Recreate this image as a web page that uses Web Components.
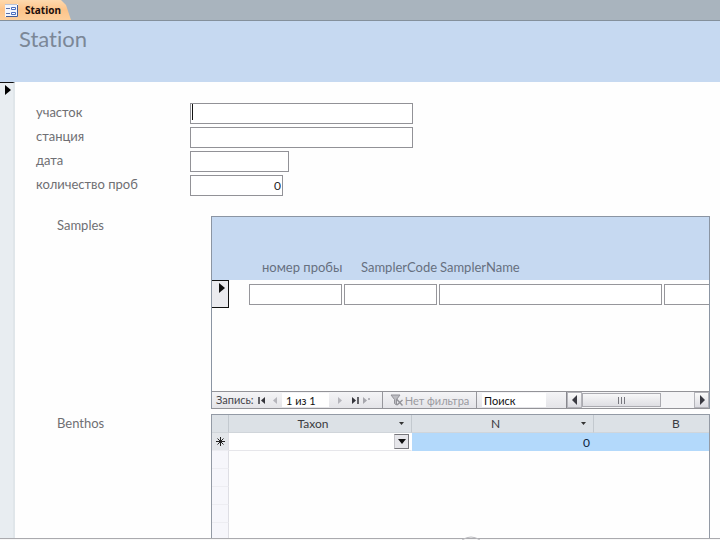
<!DOCTYPE html>
<html lang="ru">
<head>
<meta charset="utf-8">
<title>Station</title>
<style>
html, body { margin: 0; background: #fefefe; }
body { font-family: Lato, Carlito, "Open Sans", sans-serif; font-size: 12px; color: #6f6f73; font-variant-ligatures: none; font-variant-numeric: tabular-nums; }
</style>
</head>
<body>
<station-form></station-form>

<template id="t-tabs">
<style>
:host { display: flex; height: 20px; background: #a9b4be; border-bottom: 1px solid #84909b; }
button { display: flex; align-items: center; gap: 7px; height: 20px; padding: 0 13px 0 5px; border: 0;
  background: linear-gradient(#fdd9ae, #fdc48a 50%, #fdcf9c); clip-path: polygon(0 0, 61px 0, 66px 5px, 71px 20px, 0 20px);
  font: bold 10px "Noto Sans", sans-serif; color: #1c0f0c; }
svg { flex: none; }
</style>
<button type="button"><svg width="13" height="13" viewBox="0 0 13 13"><path d="M0 0h13v13H0z" fill="#f3f6fd"/><path d="M12.500 1v11.500H1" fill="none" stroke="#425c97"/><path d="M0 .5h12" stroke="#b9c3d8"/><path d="M1 4.500h4M1 9.500h4" stroke="#5a70a8"/><path d="M6.500 3.500h4v2h-4zM6.500 8.500h4v2h-4z" fill="#fff" stroke="#4a6ec0"/></svg><slot></slot></button>
</template>

<template id="t-field">
<style>
:host { display: flex; align-items: flex-start; height: 24px; }
label { width: 154px; flex: none; line-height: 18px; font-size: 13px; }
input { box-sizing: border-box; width: var(--w, 223px); height: 21px; margin: 0; padding: 0 1px; border: 1px solid #929297; background: #fff;
  font: 12px Lato, sans-serif; font-variant-numeric: tabular-nums; color: #26262a; text-align: right; outline: 0; border-radius: 0; }
:host([active]) input { background: linear-gradient(#111, #111) 1px 0 / 1px 16px no-repeat #fff; }
</style>
<label for="f"></label><input id="f" type="text">
</template>

<template id="t-sub">
<style>
:host { display: flex; }
span { width: 154px; flex: none; line-height: 18px; font-size: 13px; }
section { flex: 1; min-width: 0; display: flex; flex-direction: column; }
</style>
<span id="n"></span><section aria-labelledby="n"><slot></slot></section>
</template>

<template id="t-nav">
<style>
:host { display: flex; align-items: stretch; height: 16px; border-top: 1px solid #939398; background: linear-gradient(#f4f4f6, #e4e4e8); font-size: 11px; color: #44444a; line-height: 16px; }
label { box-sizing: border-box; padding-left: 4px; width: 43px; flex: none; white-space: nowrap; }
button { padding: 0; margin: 0; border: 0; background: none; font: 11px Lato, sans-serif; color: #9a9aa0; display: flex; align-items: center; justify-content: center; flex: none; width: 13px; }
input { box-sizing: border-box; border: 0; margin: 1px 0; padding: 0 4px; background: #fff; font: 11px Lato, sans-serif; font-variant-numeric: tabular-nums; color: #111; flex: none; outline: 0; border-radius: 0; }
input::placeholder { color: #111; opacity: 1; }
#rec { width: 47px; }
#find { width: 64px; margin-left: 5px; padding: 0 2px; }
.first { width: 14px; }
.next { width: 20px; }
.new { width: 10px; }
.filter { width: 95px; gap: 2px; margin-left: 10px; border: solid #97979c; border-width: 0 1px; white-space: nowrap; }
.bar { flex: 1; min-width: 60px; display: flex; margin-left: 20px; border-left: 1px solid #88888e; background: #f4f4f6; }
.bar button { width: 15px; background: linear-gradient(#fafafa, #dcdce2); border: 1px solid #b4b4ba; box-sizing: border-box; }
.thumb { width: 79px; flex: none; box-sizing: border-box; margin: 1px 0; border: 1px solid #aaaab0; background: linear-gradient(#f7f7f8, #dedee3); display: flex; align-items: center; justify-content: center; }
.gap { flex: 1; }
</style>
<label for="rec">Запись:</label>
<button type="button" aria-label="Первая запись" class="first"><svg width="9" height="9"><path d="M1 1v7" stroke="#34343a" stroke-width="1.500"/><path d="M7 1v7L3 4.500z" fill="#34343a"/></svg></button>
<button type="button" aria-label="Предыдущая запись"><svg width="7" height="7"><path d="M5 0v7L1 3.500z" fill="#b5b5bb"/></svg></button>
<input id="rec" type="text" value="1 из 1">
<button type="button" aria-label="Следующая запись" class="next"><svg width="7" height="7"><path d="M2 0v7l4-3.500z" fill="#b5b5bb"/></svg></button>
<button type="button" aria-label="Последняя запись"><svg width="9" height="9"><path d="M7 1v7" stroke="#34343a" stroke-width="1.500"/><path d="M1 1v7l4-3.500z" fill="#34343a"/></svg></button>
<button type="button" aria-label="Новая запись" class="new"><svg width="10" height="9"><path d="M1 1v7l4-3.500z" fill="#a6a6ac"/><path d="M6 2l2 2M8 2L6 4" stroke="#b5b5bb"/></svg></button>
<button type="button" class="filter"><svg width="13" height="12" viewBox="0 0 13 12"><path d="M1 1h9L6.500 5.500V11L4.500 9.500v-4z" fill="#bdbdc2" stroke="#929298"/><path d="M6.500 5l6 6.500M12.500 6L7 11" stroke="#929298" stroke-width="1.400"/></svg>Нет фильтра</button>
<input id="find" type="text" placeholder="Поиск" aria-label="Поиск">
<div class="bar"><button type="button" aria-label="Влево"><svg width="6" height="10"><path d="M5 0v10L0 5z" fill="#3a3a42"/></svg></button><div class="thumb"><svg width="7" height="7"><path d="M.5 0v7M3.500 0v7M6.500 0v7" stroke="#77777e"/></svg></div><div class="gap"></div><button type="button" aria-label="Вправо"><svg width="6" height="10"><path d="M1 0v10l5-5z" fill="#3a3a42"/></svg></button></div>
</template>

<template id="t-samples">
<style>
:host { display: flex; flex-direction: column; border: 1px solid #8b95a3; border-bottom-color: #939398; background: #fefefe; overflow: hidden; }
header { height: 63px; background: #c6d9f1; display: flex; align-items: flex-end; box-sizing: border-box; padding: 0 0 4px 50px; color: #66707f; line-height: 18px; font-size: 13px; white-space: nowrap; }
header label:nth-child(1) { width: 99px; flex: none; }
header label:nth-child(2) { width: 79px; flex: none; }
.row { display: flex; height: 111px; }
.sel { width: 17px; height: 28px; box-sizing: border-box; border: solid #111; border-width: 1px 1px 1px 0; background: #ebebef; display: flex; padding: 2px 0 0 7px; flex: none; margin-right: 20px; }
input { flex: none; box-sizing: border-box; width: 93px; height: 21px; margin: 4px 2px 0 0; border: 1px solid #96969b; background: #fff; padding: 0; outline: 0; border-radius: 0; }
.wide { width: 223px; }
</style>
<header><label for="a">номер пробы</label><label for="b">SamplerCode</label><label for="c">SamplerName</label></header>
<div class="row"><div class="sel"><svg width="6" height="10"><path d="M0 0v10l6-5z" fill="#111"/></svg></div><input id="a" type="text"><input id="b" type="text"><input id="c" class="wide" type="text"><input type="text" aria-label="Поле"></div>
<record-nav></record-nav>
</template>

<template id="t-sheet">
<style>
:host { display: block; flex: 1 1 0px; border: solid #939aa5; border-width: 1px 1px 0; overflow: hidden; min-height: 100px; }
table { table-layout: fixed; width: 547px; border-collapse: separate; border-spacing: 0; font-size: 12px; color: #3b3b41; }
.clip { height: 0; }
th, td { box-sizing: border-box; height: 18px; padding: 0; line-height: 17px; font-weight: 400; border-right: 1px solid #c3c9cf; }
thead th { background: #dce1e6; border-bottom: 1px solid #d0d5da; }
thead div { display: flex; align-items: center; padding-right: 5px; }
thead div span { flex: 1; }
button { padding: 0; border: 0; background: none; display: flex; align-items: center; justify-content: center; width: 9px; height: 12px; }
tbody th { background: #f6f6fb; border-color: #dedee4; border-bottom: 1px solid #ededf2; }
tbody td { border-right-color: transparent; }
.new th { background: #e3e6ea; }
.new td { background: #b3d9fb; text-align: right; padding-right: 3px; color: #0c2340; }
.new td.cur { background: #fff; padding: 0 2px 0 0; border-bottom: 1px solid #e6e6ea; }
.cur button { width: 15px; height: 15px; margin-left: auto; border: 1px solid #77777c; border-left-color: #c5c5ca; background: #e6e6ea; }
th svg { display: block; margin: auto; }
</style>
<div class="clip"><table><colgroup><col style="width:17px"><col style="width:183px"><col style="width:182px"><col></colgroup>
<thead><tr><th></th><th><div><span>Taxon</span><button type="button" aria-label="Меню Taxon"><svg width="5" height="3"><path d="M0 0h5L2.500 3z" fill="#333"/></svg></button></div></th><th><div><span>N</span><button type="button" aria-label="Меню N"><svg width="5" height="3"><path d="M0 0h5L2.500 3z" fill="#333"/></svg></button></div></th><th>B</th></tr></thead>
<tbody><tr class="new"><th><svg width="9" height="9"><path d="M4.500 0v9M0 4.500h9M1.500 1.500l6 6M7.500 1.500l-6 6" stroke="#222"/></svg></th><td class="cur"><button type="button" aria-label="Выбрать Taxon"><svg width="8" height="5"><path d="M0 0h8L4 5z" fill="#111"/></svg></button></td><td>0</td><td></td></tr>
<tr><th></th><td></td><td></td><td></td></tr><tr><th></th><td></td><td></td><td></td></tr><tr><th></th><td></td><td></td><td></td></tr><tr><th></th><td></td><td></td><td></td></tr><tr><th></th><td></td><td></td><td></td></tr></tbody></table></div>
</template>

<template id="t-form">
<style>
:host { display: flex; flex-direction: column; min-height: 100vh; }
h1 { margin: 0; height: 61px; box-sizing: border-box; padding: 4px 19px; background: #c6d9f1; color: #7b8797; font-size: 22px; line-height: 28px; font-weight: 400; }
main { flex: 1; display: flex; }
aside { width: 15px; flex: none; box-sizing: border-box; background: #e8edf1; border-top: 1px solid #111; border-right: 2px solid #e0e6ea; padding: 2px 0 0 5px; }
aside svg { display: block; }
.body { flex: 1; min-width: 0; display: flex; flex-direction: column; padding: 21px 10px 0 21px; }
sub-form { margin-left: 21px; }
.one { margin-top: 17px; }
.two { margin-top: 5px; flex: 1; }
footer { position: relative; flex: none; height: 1px; border-top: 1px solid #aaaaae; background: #f8f8f8; }
footer svg { position: absolute; left: 460px; bottom: 0; }
</style>
<doc-tabs>Station</doc-tabs>
<h1>Station</h1>
<main><aside><svg width="7" height="10"><path d="M0 0v10l6-5z" fill="#000"/></svg></aside>
<div class="body">
<form-field label="участок" active></form-field>
<form-field label="станция"></form-field>
<form-field label="дата" style="--w:99px"></form-field>
<form-field label="количество проб" value="0" style="--w:93px"></form-field>
<sub-form class="one" label="Samples"><samples-form></samples-form></sub-form>
<sub-form class="two" label="Benthos"><data-sheet></data-sheet></sub-form>
</div></main>
<footer><svg width="22" height="4"><path d="M2 4Q11-2 20 4" fill="none" stroke="#bcbcc0"/></svg></footer>
</template>

<script>
class Base extends HTMLElement {
  constructor() {
    super();
    this.attachShadow({ mode: "open" }).append(
      document.getElementById(this.constructor.template).content.cloneNode(true));
  }
}
class DocTabs extends Base { static template = "t-tabs"; }
class FormField extends Base {
  static template = "t-field";
  connectedCallback() {
    this.shadowRoot.querySelector("label").textContent = this.getAttribute("label");
    this.shadowRoot.querySelector("input").value = this.getAttribute("value") || "";
  }
}
class SubForm extends Base {
  static template = "t-sub";
  connectedCallback() { this.shadowRoot.getElementById("n").textContent = this.getAttribute("label"); }
}
class RecordNav extends Base { static template = "t-nav"; }
class SamplesForm extends Base { static template = "t-samples"; }
class DataSheet extends Base { static template = "t-sheet"; }
class StationForm extends Base { static template = "t-form"; }
customElements.define("doc-tabs", DocTabs);
customElements.define("form-field", FormField);
customElements.define("sub-form", SubForm);
customElements.define("record-nav", RecordNav);
customElements.define("samples-form", SamplesForm);
customElements.define("data-sheet", DataSheet);
customElements.define("station-form", StationForm);
</script>
</body>
</html>
